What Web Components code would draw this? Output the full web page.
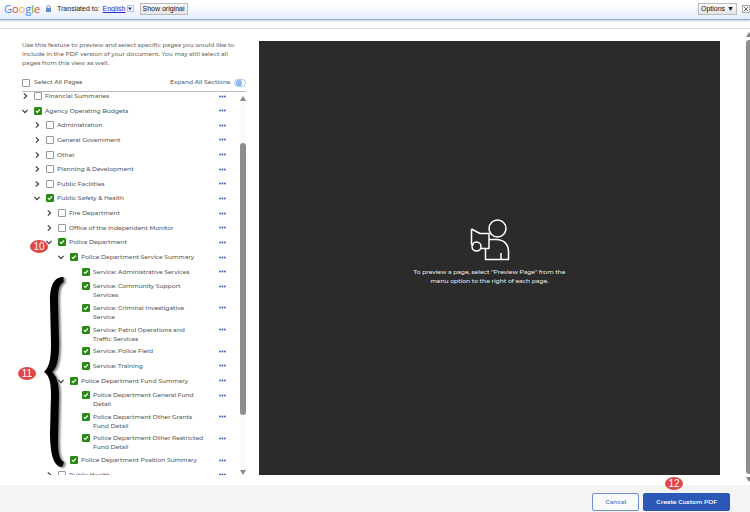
<!DOCTYPE html>
<html lang="en">
<head>
<meta charset="utf-8">
<title>Custom PDF</title>
<style>
html, body { height: 100%; }
body { margin: 0; background: #fff; color: #555; font: 500 6px/9px Montserrat, Inter, sans-serif; overflow: hidden; }
</style>
</head>
<body>
<pdf-builder></pdf-builder>
<script>
const define = (name, html, setup) => customElements.define(name, class extends HTMLElement {
  connectedCallback() {
    if (this.shadowRoot) return;
    const root = this.attachShadow({ mode: 'open' });
    const t = document.createElement('template');
    t.innerHTML = typeof html === 'function' ? html(this) : html;
    root.append(t.content.cloneNode(true));
    if (setup) setup(this, root);
  }
});

define('translate-bar', `
<style>
:host { display: flex; align-items: center; box-sizing: border-box; height: 20px; padding: 0 0 2px 4px; color: #222;
  font: 400 7px/9px "Liberation Sans", sans-serif; background: linear-gradient(#fff 20%, #e4edfc); border-bottom: 1px solid #92abd6; box-shadow: 0 1px 2px #ccd; }
.logo { font: 500 11px/16px "Open Sans", sans-serif; width: 36px; }
.b { color: #4285f4 } .r { color: #ea4335 } .y { color: #fbbc05 } .g { color: #34a853 }
.lock { width: 5px; height: 7px; margin: 0 6px; }
a { color: #2a2ad0; margin-left: 3px; }
.drop { width: 7px; height: 7px; padding: 0; margin-left: 1px; border: 1px solid #a9c3ee; background: #fff; display: grid; place-items: center; }
.drop svg { width: 4px; height: 4px; }
.push { box-sizing: border-box; height: 12px; padding: 0 2px; font: inherit; color: #111; border: 1px solid #bbb; background: linear-gradient(#fafafa, #e6e6e6); white-space: nowrap; }
.show { margin-left: 6px; }
.options { margin-left: auto; }
.close { width: 8px; height: 8px; padding: 0; margin-left: 5px; border: 1px solid #aaa; background: #fff; display: grid; place-items: center; }
.close svg { width: 6px; height: 6px; }
</style>
<span class="logo"><span class="b">G</span><span class="r">o</span><span class="y">o</span><span class="b">g</span><span class="g">l</span><span class="r">e</span></span>
<svg class="lock" viewBox="0 0 10 14"><path d="M2 7V4a3 3 0 0 1 6 0v3" fill="none" stroke="#7295c9" stroke-width="2"/><rect y="6" width="10" height="8" rx="1" fill="#5f8acb"/></svg>
<span>Translated to:</span><a href="#language">English</a>
<button class="drop" aria-label="Choose language"><svg viewBox="0 0 8 8"><path d="M0 1h8L4 7z" fill="#2233bb"/></svg></button>
<button class="push show">Show original</button>
<button class="push options">Options ▼</button>
<button class="close" aria-label="Close"><svg viewBox="0 0 8 8"><path d="M1 1l6 6M7 1L1 7" stroke="#666" stroke-width="1.3"/></svg></button>`);

define('scroll-track', `
<style>
:host { display: flex; flex-direction: column; align-items: center; width: 6px; background: var(--track, #fafafa); gap: var(--gap, 4px); }
i { flex: none; width: 6px; height: 5px; background: #888; clip-path: polygon(50% 0, 100% 100%, 0 100%); }
i:last-child { clip-path: polygon(0 0, 100% 0, 50% 100%); }
.lane { flex: 1; width: 100%; display: flex; flex-direction: column; }
.before { flex: var(--before, 0); }
.thumb { flex: var(--thumb, 1); background: #8d8d8d; border-radius: 3px; }
.after { flex: var(--after, 0); }
</style><i></i><div class="lane"><div class="before"></div><div class="thumb"></div><div class="after"></div></div><i></i>`);

const boxStyle = `
input { appearance: none; flex: none; box-sizing: border-box; width: 8px; height: 8px; margin: 0; border: 1px solid #999; border-radius: 1px; background: #fff; }
input:checked { border-color: #278a14; background: #278a14 url("data:image/svg+xml,%3Csvg xmlns='http://www.w3.org/2000/svg' viewBox='0 0 8 8'%3E%3Cpath d='M1.2 4.2l1.7 1.6L6.6 2' fill='none' stroke='white' stroke-width='1.5'/%3E%3C/svg%3E") center / 6px 6px no-repeat; }`;

define('page-row', el => `
<style>${boxStyle}
:host { display: flex; align-items: flex-start; min-height: 11px; padding-left: calc(var(--level) * 12px); }
button { flex: none; height: 8px; padding: 0; border: 0; background: none; display: grid; place-items: center; }
.toggle { width: 6px; margin-right: 6px; }
.toggle svg { width: 6px; height: 6px; overflow: visible; }
:host([open]) .toggle svg { transform: rotate(90deg); }
:host([leaf]) .toggle { visibility: hidden; }
label { flex: 1; margin-left: 3px; }
.more { width: 7px; margin: 0 14px 0 15px; }
.more svg { width: 7px; height: 3px; }
</style>
<button class="toggle" aria-label="Toggle section"><svg viewBox="0 0 6 6"><path d="M1.8 .4L4.6 3 1.8 5.6" fill="none" stroke="#333" stroke-width="1.1"/></svg></button>
<input type="checkbox" id="c"${el.hasAttribute('checked') ? ' checked' : ''}>
<label for="c"><slot></slot></label>
<button class="more" aria-label="Page menu"><svg viewBox="0 0 14 6"><g fill="#3558b8"><circle cx="2.2" cy="3" r="1.8"/><circle cx="7" cy="3" r="1.8"/><circle cx="11.8" cy="3" r="1.8"/></g></svg></button>`,
  el => { el.style.setProperty('--level', el.getAttribute('level')); el.setAttribute('role', 'treeitem'); });

define('step-badge', `
<style>
:host { position: absolute; display: grid; place-items: center; width: 18px; height: 13px; border-radius: 50%; background: #e04545; color: #fff; font: 400 10px/13px "Liberation Sans", sans-serif; }
</style><slot></slot>`);

const rows = [
  [0, '', 'Financial Summaries'], [0, 'open checked', 'Agency Operating Budgets'],
  [1, '', 'Administration'], [1, '', 'General Government'], [1, '', 'Other'],
  [1, '', 'Planning &amp; Development'], [1, '', 'Public Facilities'],
  [1, 'open checked', 'Public Safety &amp; Health'], [2, '', 'Fire Department'],
  [2, '', 'Office of the Independent Monitor'], [2, 'open checked', 'Police Department'],
  [3, 'open checked', 'Police Department Service Summary'],
  [4, 'leaf checked', 'Service: Administrative Services'],
  [4, 'leaf checked', 'Service: Community Support Services'],
  [4, 'leaf checked', 'Service: Criminal Investigative Service'],
  [4, 'leaf checked', 'Service: Patrol Operations and Traffic Services'],
  [4, 'leaf checked', 'Service: Police Field'], [4, 'leaf checked', 'Service: Training'],
  [3, 'open checked', 'Police Department Fund Summary'],
  [4, 'leaf checked', 'Police Department General Fund Detail'],
  [4, 'leaf checked', 'Police Department Other Grants Fund Detail'],
  [4, 'leaf checked', 'Police Department Other Restricted Fund Detail'],
  [3, 'leaf checked', 'Police Department Position Summary'], [2, '', 'Public Health']
];

define('page-picker', `
<style>${boxStyle}
:host { display: flex; flex-direction: column; min-height: 0; }
p { margin: 0; color: #666; }
.tools { display: flex; align-items: center; margin-top: 10px; padding-bottom: 4px; border-bottom: 1px solid #bbb; }
.tools label { margin-left: 4px; }
.tools .expand { margin: 0 4px 0 auto; }
.tools .switch { width: 12px; height: 8px; border: 1px solid #a9c8f5; border-radius: 4px; background: radial-gradient(circle at 4px 3px, #8fbcf6 3px, #fff 3px); }
.view { flex: 1; min-height: 0; display: flex; overflow: hidden; }
.tree { flex: 1; display: flex; flex-direction: column; justify-content: space-between; margin: 0 0 -7px; }
scroll-track { margin-top: 4px; --before: 38; --thumb: 270; --after: 51; }
</style>
<p>Use this feature to preview and select specific pages you would like to include in the PDF version of your document. You may still select all pages from this view as well.</p>
<div class="tools"><input type="checkbox" id="all"><label for="all">Select All Pages</label><label class="expand" for="ex">Expand All Sections</label><input class="switch" type="checkbox" role="switch" id="ex"></div>
<div class="view"><div class="tree" role="tree">${rows.map(([l, f, t]) => `<page-row level="${l}" ${f}>${t}</page-row>`).join('')}</div><scroll-track></scroll-track></div>`);

define('page-preview', `
<style>
:host { display: flex; flex-direction: column; align-items: center; justify-content: center; box-sizing: border-box; background: #2b2b2b; color: #eee; text-align: center; padding-bottom: 12px; }
svg { width: 40px; height: 42px; margin-bottom: 7px; }
p { margin: 0; max-width: 160px; }
</style>
<svg viewBox="0 0 40 42" fill="none" stroke="#fff" stroke-width="1.5" stroke-linejoin="round"><circle cx="27.500" cy="9.500" r="8.500"/><path d="M1.500 10L10 14.500H19V29.500H10.500M1.500 10V25l2 1"/><circle cx="6.500" cy="27.500" r="4.500"/><path d="M19 20.500h7c8 0 12.500 5 12.500 12v8H15.500V30M31 34v6.500"/></svg>
<p>To preview a page, select "Preview Page" from the menu option to the right of each page.</p>`);

define('action-bar', `
<style>
:host { display: flex; justify-content: flex-end; gap: 4px; padding: 8px 20px 1px; background: #f4f4f4; }
button { box-sizing: border-box; height: 18px; padding: 0 12px; font: inherit; font-weight: 600; border: 1px solid #6f90cf; border-radius: 2px; background: #fafafa; color: #5f80c0; }
.primary { background: #2c59b7; border-color: #2c59b7; color: #fff; }
</style>
<button>Cancel</button><button class="primary">Create Custom PDF</button>`);

define('curly-mark', `
<style>:host { position: absolute; pointer-events: none; } svg { display: block; width: 24px; height: 198px; overflow: visible; filter: drop-shadow(2px 1px 1px #777); }</style>
<svg viewBox="0 0 24 198"><path d="M19.500 4C9 4 6 14 6 28L7 70C7 88 5 94 0 99C5 102 7 108 7 122L6 160C6 182 10 194 18 194L20 189C15 187 14 180 14 164L15 122C15 108 12 103 8 99C13 95 15 86 15 70L14 28C14 16 15 12 19.500 9Z" fill="#000"/></svg>`);

define('pdf-builder', `
<style>
:host { display: flex; flex-direction: column; height: 100%; position: relative; overflow: hidden; }
main { flex: 1; min-height: 0; display: flex; margin-top: 8px; border-top: 1px solid #ddd; }
.work { flex: 1; min-width: 0; display: grid; grid-template-columns: 224px 1fr; gap: 13px; padding: 12px 26px 10px 22px; grid-template-rows: minmax(0, 1fr); }
main > scroll-track { margin: 3px -2px 3px 0; --gap: 3px; --track: #fff; }
</style>
<translate-bar></translate-bar>
<main><div class="work"><page-picker></page-picker><page-preview></page-preview></div><scroll-track></scroll-track></main>
<action-bar></action-bar>
<curly-mark style="left:44px;top:273px"></curly-mark>
<step-badge style="left:30px;top:240px">10</step-badge>
<step-badge style="left:18px;top:367px">11</step-badge>
<step-badge style="right:67px;top:477px">12</step-badge>`);
</script>
</body>
</html>
